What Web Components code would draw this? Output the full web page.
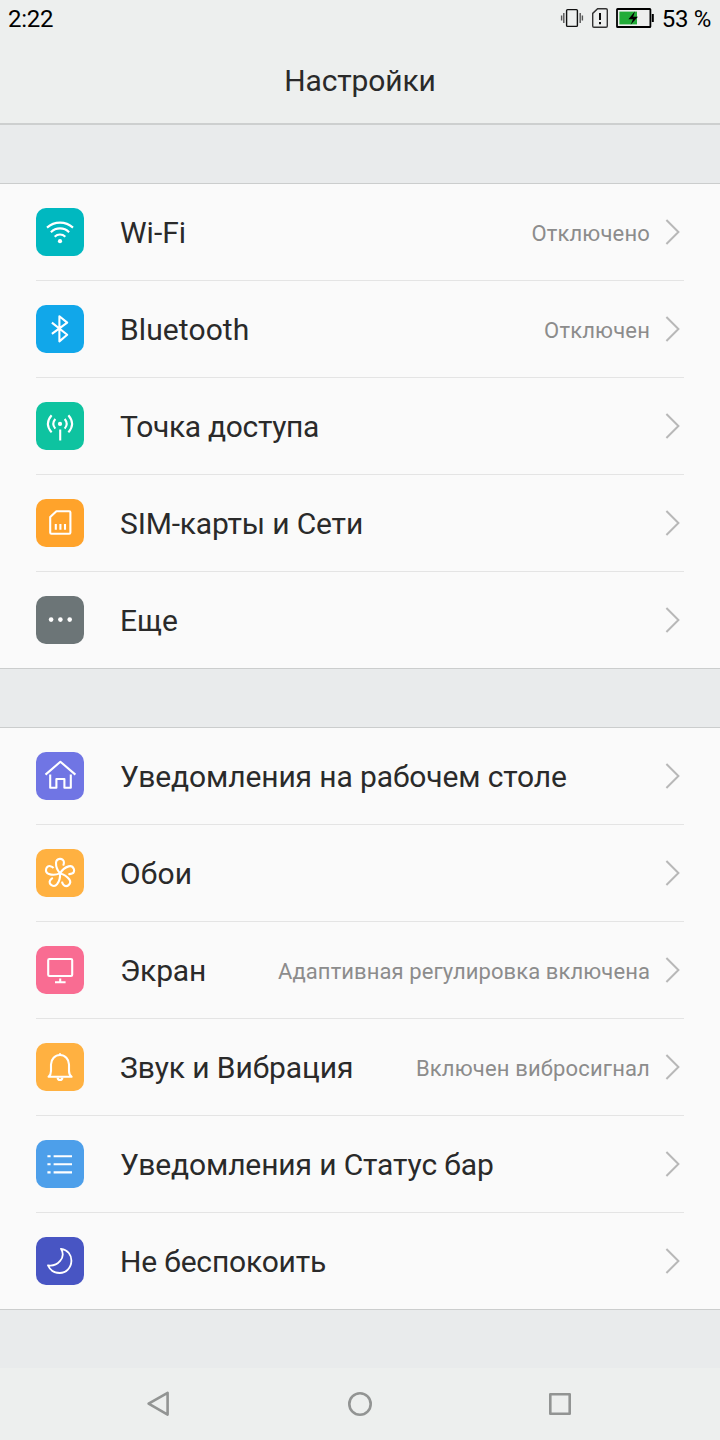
<!DOCTYPE html>
<html lang="ru">
<head>
<meta charset="utf-8">
<title>Настройки</title>
<style>
  body {
    margin: 0;
    background: #e9ebec;
    font-family: Roboto, "Noto Sans", sans-serif;
  }
</style>
</head>
<body>
<settings-screen></settings-screen>

<script>
const ICONS = {
  wifi: `
    <path d="M11 19.6A19.4 19.4 0 0 1 37 19.6M14.9 24.2A12.8 12.8 0 0 1 33.1 24.2M18.7 28.7A7.6 7.6 0 0 1 29.3 28.7"/>
    <circle class="fill" cx="24" cy="33.2" r="2.1"/>`,
  bluetooth: `<path d="M15.9 17.6L31.2 29.8L23.4 36.4V11.2L31.2 17.6L15.9 28.9"/>`,
  hotspot: `
    <path d="M15.6 13.2Q8.2 21.8 15.6 30.4M32.4 13.2Q39.8 21.8 32.4 30.4M19.3 17Q15.3 21.8 19.3 26.6M28.7 17Q32.7 21.8 28.7 26.6M24.2 27.5V38.6"/>
    <circle class="fill" cx="24" cy="21.9" r="2.1"/>`,
  sim: `
    <path d="M20.4 12.2H33.2Q34.4 12.2 34.4 13.4V33.4Q34.4 34.7 33.2 34.7H15.4Q14.2 34.7 14.2 33.4V18Z"/>
    <path d="M19.8 25V30.8M24.4 25V30.8M29 25V30.8"/>`,
  more: `
    <circle class="fill" cx="15.1" cy="23.6" r="2.3"/>
    <circle class="fill" cx="24.4" cy="23.6" r="2.3"/>
    <circle class="fill" cx="33.7" cy="23.6" r="2.3"/>`,
  home: `<path d="M9.5 22.6L24.4 9.8L39.4 22.6M14.2 22.4V35.8H20.4V27H28.4V35.8H34.8V22.4"/>`,
  flower: [0, 72, 144, 216, 288].map(angle =>
    `<path transform="rotate(${angle} 24 24.4)" d="M24 24.4C21.6 21.6 19.9 17.6 20 14C20.2 8.7 27.6 8.6 27.9 13C28 14.4 27.7 15.6 27.2 16.6"/>`).join(''),
  screen: `
    <rect x="12.2" y="13" width="24" height="17" rx="1.2"/>
    <path d="M24.2 32.4V36M19 36.2H29.6"/>`,
  bell: `
    <path d="M12.6 33.8Q15 31.6 15 28V21.6A9 9.6 0 0 1 33 21.6V28Q33 31.6 35.6 33.8Z"/>
    <path d="M23 11.2H25M21.6 34.6Q21.8 37 24 37Q26.2 37 26.4 34.6"/>`,
  list: `<path d="M11.4 16.2H14.6M17.6 16.2H36M11.4 24.3H14.6M17.6 24.3H36M11.4 32.4H14.6M17.6 32.4H36"/>`,
  moon: `<path stroke-width="1.8" d="M25 11.8C31.8 12.6 35.6 18 35.4 24C35.2 30.8 30 36 23.8 36C18.2 36 14 33 12 28.4C21.6 29.8 30.4 20.6 25 11.8Z"/>`
};

const GROUPS = [
  [
    { icon: 'wifi', color: '#00b8c0', label: 'Wi-Fi', value: 'Отключено', spacing: 0 },
    { icon: 'bluetooth', color: '#11a7ea', label: 'Bluetooth', value: 'Отключен', spacing: .1 },
    { icon: 'hotspot', color: '#0ec3a0', label: 'Точка доступа', spacing: -.32 },
    { icon: 'sim', color: '#ffa32b', label: 'SIM-карты и Сети', spacing: -.16 },
    { icon: 'more', color: '#6c7577', label: 'Еще', spacing: 0 }
  ],
  [
    { icon: 'home', color: '#7075e4', label: 'Уведомления на рабочем столе', spacing: -.12 },
    { icon: 'flower', color: '#ffb141', label: 'Обои', spacing: .15 },
    { icon: 'screen', color: '#f96c92', label: 'Экран', value: 'Адаптивная регулировка включена', spacing: -.15 },
    { icon: 'bell', color: '#ffb141', label: 'Звук и Вибрация', value: 'Включен вибросигнал', spacing: -.08 },
    { icon: 'list', color: '#4d9fea', label: 'Уведомления и Статус бар', spacing: -.13 },
    { icon: 'moon', color: '#4855c3', label: 'Не беспокоить', spacing: -.18 }
  ]
];

class StatusBar extends HTMLElement {
  constructor() {
    super();
    this.attachShadow({ mode: 'open' }).innerHTML = `
    <style>
      :host {
        display: flex;
        align-items: center;
        justify-content: space-between;
        box-sizing: border-box;
        height: 36px;
        padding: 2px 9px 0 8px;
        color: #000;
        font-size: 24px;
        letter-spacing: -.3px;
        line-height: 38px;
      }
      .icons {
        display: flex;
        align-items: center;
      }
      svg {
        display: block;
        margin-right: 8px;
      }
    </style>
    <slot></slot>
    <div class="icons">
      <svg width="94" height="36" viewBox="560 1 94 36" fill="none" stroke="#111" stroke-width="1.4">
        <rect x="566.6" y="9.6" width="10.8" height="16.8" rx="1"/>
        <path stroke="#555" d="M563.8 13V23M561.6 15.5V20.5M580.2 13V23M582.4 15.5V20.5"/>
        <path d="M597.6 8.8H606Q607.3 8.8 607.3 10V26Q607.3 27.3 606 27.3H594Q592.7 27.3 592.7 26V13.4Z" stroke="#333"/>
        <path d="M600 13V20M600 22V24.2" stroke="#000" stroke-width="1.9"/>
        <rect x="617" y="9" width="33.4" height="18" rx=".6" stroke="#000" stroke-width="1.8"/>
        <path d="M619.4 11.6H637V24.4H619.4Z" fill="#22ac38" stroke="none"/>
        <path d="M635 11.2L628.4 19.2H633L630.6 24.8L638 16.8H633.2Z" fill="#000" stroke="none"/>
        <path d="M652.8 14V22" stroke="#000" stroke-width="2"/>
      </svg>
      <slot name="battery"></slot>
    </div>`;
  }
}
customElements.define('status-bar', StatusBar);

class TitleBar extends HTMLElement {
  constructor() {
    super();
    this.attachShadow({ mode: 'open' }).innerHTML = `
    <style>
      :host {
        display: flex;
        justify-content: center;
        height: 87px;
        border-bottom: 2px solid #cdcfcf;
        color: #2a2a2a;
        font-size: 30px;
        letter-spacing: -.15px;
        line-height: 89px;
      }
    </style>
    <slot></slot>`;
  }
}
customElements.define('title-bar', TitleBar);

class SettingsItem extends HTMLElement {
  constructor() {
    super();
    this.shadowDOM = this.attachShadow({ mode: 'open' });
  }

  set item(item) {
    this._item = item;
    this.render();
  }

  render() {
    const { icon, color, label, value, spacing } = this._item;
    this.shadowDOM.innerHTML = `
    <style>
      :host {
        display: flex;
        align-items: center;
        height: 96px;
        margin: 0 36px;
        line-height: 36px;
      }
      .tile {
        width: 48px;
        height: 48px;
        margin-right: 36px;
        border-radius: 10px;
        background: ${color};
        fill: none;
        stroke: #fff;
        stroke-width: 2.1;
        stroke-linejoin: round;
      }
      .tile .fill {
        fill: #fff;
        stroke: none;
      }
      .label {
        flex: 1;
        padding-top: 2px;
        color: #2a2a2a;
        font-size: 30px;
        letter-spacing: ${spacing}px;
      }
      .value {
        padding-top: 3px;
        color: #8c8c8c;
        font-size: 22px;
        letter-spacing: ${value && value.length > 20 ? .09 : .16}px;
      }
      .chevron {
        margin: 0 3px 0 15px;
        fill: none;
        stroke: #b8b8b8;
        stroke-width: 2;
      }
    </style>
    <svg class="tile" viewBox="0 0 48 48">${ICONS[icon]}</svg>
    <span class="label">${label}</span>
    ${value ? `<span class="value">${value}</span>` : ''}
    <svg class="chevron" width="16" height="28" viewBox="0 0 16 28"><path d="M1.4 2L13.4 14L1.4 26"/></svg>`;
  }
}
customElements.define('settings-item', SettingsItem);

class SettingsGroup extends HTMLElement {
  constructor() {
    super();
    this.attachShadow({ mode: 'open' }).innerHTML = `
    <style>
      :host {
        display: block;
        margin-top: 58px;
        border-top: 1px solid #cbcdcd;
        border-bottom: 1px solid #cbcdcd;
        background: #fafafa;
      }
      ::slotted(hr) {
        height: 1px;
        margin: 0 36px;
        border: 0;
        background: #e4e4e4;
      }
    </style>
    <slot></slot>`;
  }

  set items(items) {
    items.forEach((item, index) => {
      if (index > 0) this.append(document.createElement('hr'));
      const element = document.createElement('settings-item');
      element.item = item;
      this.append(element);
    });
  }
}
customElements.define('settings-group', SettingsGroup);

class NavBar extends HTMLElement {
  constructor() {
    super();
    this.attachShadow({ mode: 'open' }).innerHTML = `
    <style>
      :host {
        display: flex;
        align-items: center;
        justify-content: center;
        gap: 168px;
        height: 72px;
        background: #edefee;
      }
      svg {
        width: 32px;
        height: 32px;
        fill: none;
        stroke: #929493;
        stroke-width: 2.6;
        stroke-linejoin: round;
      }
    </style>
    <svg viewBox="0 0 32 32"><path d="M4.6 15.6L23.6 4.8V26.6Z"/></svg>
    <svg viewBox="0 0 32 32"><circle cx="16" cy="16" r="10.7"/></svg>
    <svg viewBox="0 0 32 32"><rect x="6.3" y="6.3" width="19.4" height="19.4"/></svg>`;
  }
}
customElements.define('nav-bar', NavBar);

class SettingsScreen extends HTMLElement {
  constructor() {
    super();
    this.shadowDOM = this.attachShadow({ mode: 'open' });
  }

  connectedCallback() {
    this.shadowDOM.innerHTML = `
    <style>
      :host {
        display: flex;
        flex-direction: column;
        width: 720px;
        height: 1440px;
        background: #e9ebec;
      }
      header {
        background: #edefee;
      }
      nav-bar {
        margin-top: auto;
      }
    </style>
    <header>
      <status-bar>2:22<span slot="battery">53 %</span></status-bar>
      <title-bar>Настройки</title-bar>
    </header>
    ${GROUPS.map(() => '<settings-group></settings-group>').join('')}
    <nav-bar></nav-bar>`;
    this.shadowDOM.querySelectorAll('settings-group').forEach((group, index) => {
      group.items = GROUPS[index];
    });
  }
}
customElements.define('settings-screen', SettingsScreen);
</script>
</body>
</html>
